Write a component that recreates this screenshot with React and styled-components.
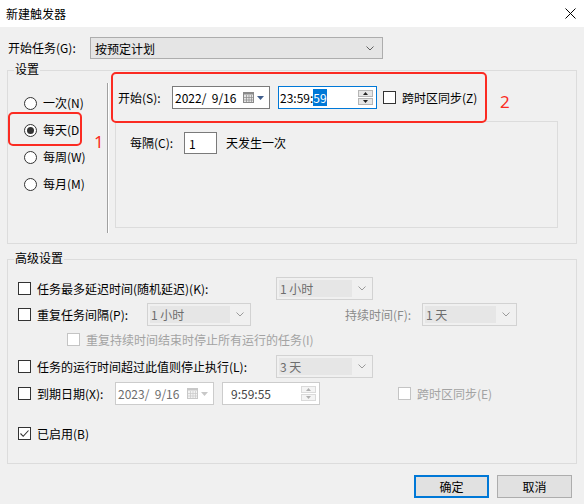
import React from 'react';
import styled, { createGlobalStyle } from 'styled-components';

const GlobalStyle = createGlobalStyle`
  html, body {
    margin: 0;
    padding: 0;
    background: #f0f0f0;
  }
  body {
    font-family: "Noto Sans CJK SC", "Noto Sans", sans-serif;
    font-size: 12px;
    color: #000;
  }
`;

const Window = styled.div`
  position: relative;
  width: 584px;
  height: 504px;
  display: flex;
  flex-direction: column;
  background: #f0f0f0;
  overflow: hidden;
`;

const TitleBar = styled.div`
  height: 27px;
  flex: none;
  display: flex;
  align-items: center;
  justify-content: space-between;
  padding: 0 8px 0 6px;
  background: #fff;
`;

const Title = styled.span`
  line-height: 16px;
`;

const Content = styled.div`
  display: flex;
  flex-direction: column;
  padding: 10px 7px 0 7px;
`;

const TaskRow = styled.div`
  display: flex;
  align-items: center;
  height: 22px;
  padding-left: 1px;
`;

const Label = styled.span`
  flex: none;
  width: ${p => (p.$w ? `${p.$w}px` : 'auto')};
  margin-left: ${p => p.$ml || 0}px;
  line-height: 16px;
  white-space: nowrap;
  color: ${p => {
    switch (p.$tone) {
      case 'muted':
        return '#8a8a8a';
      case 'faint':
        return '#a3a3a3';
      default:
        return '#000';
    }
  }};
`;

const Group = styled.div`
  position: relative;
  box-sizing: border-box;
  height: ${p => p.$h}px;
  margin-top: ${p => p.$mt}px;
  border: 1px solid #dcdcdc;
  display: flex;
  flex-direction: ${p => (p.$column ? 'column' : 'row')};
  padding: ${p => p.$pad};
`;

const Legend = styled.span`
  position: absolute;
  top: -10px;
  left: 6px;
  padding: 0 1px;
  line-height: 16px;
  background: #f0f0f0;
`;

const RadioList = styled.div`
  width: 99px;
  box-sizing: border-box;
  display: flex;
  flex-direction: column;
  gap: 7px;
  padding: 10px 0 0 16px;
`;

const RadioRow = styled.div`
  display: flex;
  align-items: center;
  height: 20px;
  gap: 6px;
`;

const RadioCircle = styled.span`
  width: 13px;
  height: 13px;
  box-sizing: border-box;
  border: 1px solid #333;
  border-radius: 50%;
  background: #fff;
  display: flex;
  align-items: center;
  justify-content: center;

  &::after {
    content: '';
    display: ${p => (p.$checked ? 'block' : 'none')};
    width: 7px;
    height: 7px;
    border-radius: 50%;
    background: #333;
  }
`;

const Divider = styled.div`
  width: 1px;
  align-self: stretch;
  background: #a0a0a0;
  box-shadow: 1px 0 0 #fff;
`;

const SchedulePane = styled.div`
  flex: 1;
  display: flex;
  flex-direction: column;
  margin-left: 7px;
`;

const StartRow = styled.div`
  display: flex;
  align-items: center;
  height: 23px;
  margin-top: 3px;
  padding-left: 3px;
`;

const RecurBox = styled.div`
  box-sizing: border-box;
  height: 107px;
  margin-top: 12px;
  border: 1px solid #dcdcdc;
  padding: 10px 0 0 14px;
`;

const RecurRow = styled.div`
  display: flex;
  align-items: center;
  height: 22px;
`;

const NumberBox = styled.div`
  width: 33px;
  height: 22px;
  box-sizing: border-box;
  border: 1px solid #7a7a7a;
  background: #fff;
  padding-left: 4px;
  display: flex;
  align-items: center;
  margin-right: 9px;
`;

const Field = styled.div`
  flex: none;
  width: ${p => p.$w}px;
  height: 23px;
  margin-left: ${p => p.$ml || 0}px;
  box-sizing: border-box;
  display: flex;
  align-items: center;
  padding-left: ${p => p.$pl ?? 2}px;
  background: #fff;
  white-space: pre;
  border: 1px solid
    ${p => (p.$focus ? '#0078d7' : p.$disabled ? '#cccccc' : '#7a7a7a')};
  color: ${p => (p.$disabled ? '#6d6d6d' : '#000')};
`;

const Selected = styled.span`
  background: #0078d7;
  color: #fff;
`;

const CalendarButton = styled.span`
  margin-left: auto;
  margin-right: 5px;
  display: flex;
  align-items: center;
  gap: 3px;
`;

const Spin = styled.div`
  margin-left: auto;
  margin-right: 3px;
  width: 15px;
  display: flex;
  flex-direction: column;
  gap: 1px;
`;

const SpinButton = styled.div`
  height: 7px;
  box-sizing: border-box;
  border: 1px solid ${p => (p.$disabled ? '#dadada' : '#b5b5b5')};
  background: ${p => (p.$disabled ? '#f4f4f4' : '#e6e6e6')};
  display: flex;
  align-items: center;
  justify-content: center;
`;

const Checkbox = styled.span`
  flex: none;
  width: 13px;
  height: 13px;
  box-sizing: border-box;
  margin-left: ${p => p.$ml || 0}px;
  border: 1px solid ${p => (p.$disabled ? '#c4c4c4' : '#333')};
  background: #fff;
  display: flex;
  align-items: center;
  justify-content: center;
`;

const Combo = styled.div`
  flex: none;
  width: ${p => p.$w}px;
  height: ${p => p.$h || 23}px;
  margin-left: ${p => p.$ml || 0}px;
  box-sizing: border-box;
  display: flex;
  border: 1px solid ${p => (p.$disabled ? '#d2d2d2' : '#adadad')};
  background: ${p => (p.$disabled ? '#f0f0f0' : '#e5e5e5')};
  color: ${p => (p.$disabled ? '#6d6d6d' : '#000')};
`;

const ComboText = styled.div`
  flex: 1;
  display: flex;
  align-items: center;
  padding-left: ${p => (p.$disabled ? 1 : 4)}px;
  margin: ${p => (p.$disabled ? '2px 0 2px 2px' : '0')};
  background: ${p => (p.$disabled ? '#e6e6e6' : 'transparent')};
`;

const ComboArrow = styled.div`
  width: ${p => p.$w || 20}px;
  display: flex;
  align-items: center;
  justify-content: center;
`;

const AdvRow = styled.div`
  display: flex;
  align-items: center;
  height: 23px;
  margin-top: ${p => p.$mt || 0}px;
  padding-left: ${p => p.$pl || 0}px;
`;

const ButtonBar = styled.div`
  display: flex;
  justify-content: flex-end;
  gap: 8px;
  margin-top: 11px;
  padding-right: 5px;
`;

const Button = styled.button`
  width: 75px;
  height: 23px;
  box-sizing: border-box;
  font: inherit;
  color: #000;
  background: #e1e1e1;
  border: ${p => (p.$default ? '2px solid #0078d7' : '1px solid #adadad')};
  padding: 0;
`;

const Mark = styled.div`
  position: absolute;
  left: ${p => p.$x}px;
  top: ${p => p.$y}px;
  width: ${p => p.$w}px;
  height: ${p => p.$h}px;
  box-sizing: border-box;
  border: 2px solid #fb2b22;
  border-radius: 5px;
  pointer-events: none;
`;

const MarkNumber = styled.span`
  position: absolute;
  left: ${p => p.$x}px;
  top: ${p => p.$y}px;
  font-family: "Noto Sans", "Liberation Sans", sans-serif;
  font-size: 17px;
  line-height: 18px;
  color: #fb2b22;
`;

function CloseIcon() {
  return (
    <svg width="11" height="11" viewBox="0 0 11 11">
      <path d="M0.5 0.5 L10.5 10.5 M10.5 0.5 L0.5 10.5" stroke="#000" strokeWidth="1" />
    </svg>
  );
}

function Chevron({ color = '#606060' }) {
  return (
    <svg width="8" height="5" viewBox="0 0 8 5">
      <polyline points="0.5,0.5 4,4 7.5,0.5" fill="none" stroke={color} strokeWidth="1" />
    </svg>
  );
}

function CalendarIcon({ disabled }) {
  const c = disabled ? '#c8c8c8' : '#8a8a8a';
  const fill = disabled ? '#f2f2f2' : '#e4e4e4';
  return (
    <>
      <svg width="11" height="11" viewBox="0 0 11 11">
        <rect x="0.5" y="0.5" width="10" height="10" fill={fill} stroke={c} />
        <rect x="0.5" y="0.5" width="10" height="2" fill={c} />
        <path d="M3.5 3 V10 M6 3 V10 M8.5 3 V10 M1 5.5 H10 M1 8 H10" stroke={c} strokeWidth="0.7" />
      </svg>
      <svg width="7" height="4" viewBox="0 0 7 4">
        <polygon points="0,0 7,0 3.5,4" fill={disabled ? '#c8c8c8' : '#3f5d8c'} />
      </svg>
    </>
  );
}

function Triangle({ up, disabled }) {
  return (
    <svg width="5" height="3" viewBox="0 0 5 3">
      <polygon
        points={up ? '0,3 5,3 2.5,0' : '0,0 5,0 2.5,3'}
        fill={disabled ? '#b0b0b0' : '#222'}
      />
    </svg>
  );
}

function Check() {
  return (
    <svg width="11" height="11" viewBox="0 0 11 11">
      <polyline points="1.5,5.5 4.2,8.3 9.5,2.5" fill="none" stroke="#333" strokeWidth="1.1" />
    </svg>
  );
}

function DropList({ w, h, disabled, children }) {
  return (
    <Combo $w={w} $h={h} $disabled={disabled}>
      <ComboText $disabled={disabled}>{children}</ComboText>
      <ComboArrow $w={disabled ? 20 : 24}>
        <Chevron color={disabled ? '#9a9a9a' : '#606060'} />
      </ComboArrow>
    </Combo>
  );
}

function SpinButtons({ disabled }) {
  return (
    <Spin>
      <SpinButton $disabled={disabled}>
        <Triangle up disabled={disabled} />
      </SpinButton>
      <SpinButton $disabled={disabled}>
        <Triangle disabled={disabled} />
      </SpinButton>
    </Spin>
  );
}

const frequencies = [
  { label: '一次(N)', checked: false },
  { label: '每天(D', checked: true },
  { label: '每周(W)', checked: false },
  { label: '每月(M)', checked: false }
];

export default function App() {
  return (
    <>
      <GlobalStyle />
      <Window>
        <TitleBar>
          <Title>新建触发器</Title>
          <CloseIcon />
        </TitleBar>

        <Content>
          <TaskRow>
            <Label $w={82}>开始任务(G):</Label>
            <DropList w={293} h={22}>按预定计划</DropList>
          </TaskRow>

          <Group $h={174} $mt={11} $pad="12px 18px 10px 0">
            <Legend>设置</Legend>
            <RadioList>
              {frequencies.map(f => (
                <RadioRow key={f.label}>
                  <RadioCircle $checked={f.checked} />
                  <Label>{f.label}</Label>
                </RadioRow>
              ))}
            </RadioList>
            <Divider />
            <SchedulePane>
              <StartRow>
                <Label $w={54}>开始(S):</Label>
                <Field $w={98}>
                  {'2022/  9/16'}
                  <CalendarButton>
                    <CalendarIcon />
                  </CalendarButton>
                </Field>
                <Field $w={99} $ml={8} $pl={1} $focus>
                  23:59:<Selected>59</Selected>
                  <SpinButtons />
                </Field>
                <Checkbox $ml={6} />
                <Label $ml={6}>跨时区同步(Z)</Label>
              </StartRow>
              <RecurBox>
                <RecurRow>
                  <Label $w={54}>每隔(C):</Label>
                  <NumberBox>1</NumberBox>
                  <Label>天发生一次</Label>
                </RecurRow>
              </RecurBox>
            </SchedulePane>
          </Group>

          <Group $h={205} $mt={15} $column $pad="17px 0 0 10px">
            <Legend>高级设置</Legend>
            <AdvRow>
              <Checkbox />
              <Label $ml={6} $w={239}>任务最多延迟时间(随机延迟)(K):</Label>
              <DropList w={97} disabled>1 小时</DropList>
            </AdvRow>
            <AdvRow $mt={3}>
              <Checkbox />
              <Label $ml={6} $w={110}>重复任务间隔(P):</Label>
              <DropList w={104} disabled>1 小时</DropList>
              <Label $ml={94} $w={77} $tone="muted">持续时间(F):</Label>
              <DropList w={95} disabled>1 天</DropList>
            </AdvRow>
            <AdvRow $mt={2} $pl={49}>
              <Checkbox $disabled />
              <Label $ml={6} $tone="faint">重复持续时间结束时停止所有运行的任务(I)</Label>
            </AdvRow>
            <AdvRow $mt={4}>
              <Checkbox />
              <Label $ml={6} $w={239}>任务的运行时间超过此值则停止执行(L):</Label>
              <DropList w={97} disabled>3 天</DropList>
            </AdvRow>
            <AdvRow $mt={4}>
              <Checkbox />
              <Label $ml={6} $w={78}>到期日期(X):</Label>
              <Field $w={99} $disabled>
                {'2023/  9/16'}
                <CalendarButton>
                  <CalendarIcon disabled />
                </CalendarButton>
              </Field>
              <Field $w={98} $ml={8} $pl={8} $disabled>
                <span style={{ color: '#444' }}>9:59:55</span>
                <SpinButtons disabled />
              </Field>
              <Checkbox $ml={78} $disabled />
              <Label $ml={6} $tone="faint">跨时区同步(E)</Label>
            </AdvRow>
            <AdvRow $mt={17}>
              <Checkbox>
                <Check />
              </Checkbox>
              <Label $ml={6}>已启用(B)</Label>
            </AdvRow>
          </Group>

          <ButtonBar>
            <Button $default>确定</Button>
            <Button>取消</Button>
          </ButtonBar>
        </Content>

        <Mark $x={8} $y={112} $w={74} $h={34} />
        <MarkNumber $x={94} $y={133}>1</MarkNumber>
        <Mark $x={111} $y={72} $w={376} $h={51} />
        <MarkNumber $x={500} $y={93}>2</MarkNumber>
      </Window>
    </>
  );
}
